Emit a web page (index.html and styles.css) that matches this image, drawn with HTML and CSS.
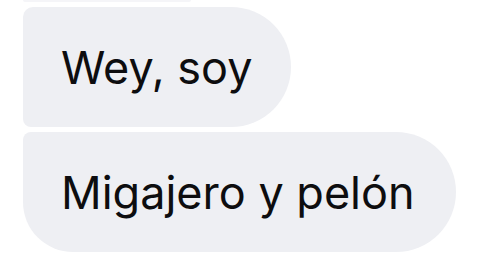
FILE: index.html
```html
<!DOCTYPE html>
<html>
<head>
    <title>Mensajes</title>
    <link rel="stylesheet" href="styles.css">
</head>
<body>
    <div class="thread">
        <div class="bubble bubble-prev"></div>
        <div class="bubble bubble-mid">Wey, soy</div>
        <div class="bubble bubble-last">Migajero y pelón</div>
    </div>
</body>
</html>
```
FILE: styles.css
```css
body {
    margin: 0;
    background: #ffffff;
    font-family: Inter, 'Liberation Sans', Arial, sans-serif;
}
.thread {
    display: flex;
    flex-direction: column;
    align-items: flex-start;
    gap: 5px;
    padding-left: 23px;
}
.bubble {
    display: flex;
    align-items: center;
    height: 120px;
    padding: 0 41px 0 38px;
    background-color: #eeeff3;
    color: #0d0d0f;
    font-size: 45px;
    white-space: nowrap;
}
.bubble-prev {
    height: 2px;
    width: 88px;
    padding: 0 40px;
    border-radius: 0 0 6px 6px;
    background-color: #f5f5f8;
}
.bubble-mid {
    padding-right: 38px;
    border-radius: 10px 60px 60px 8px;
}
.bubble-last {
    border-radius: 8px 60px 60px 50px;
}
```
